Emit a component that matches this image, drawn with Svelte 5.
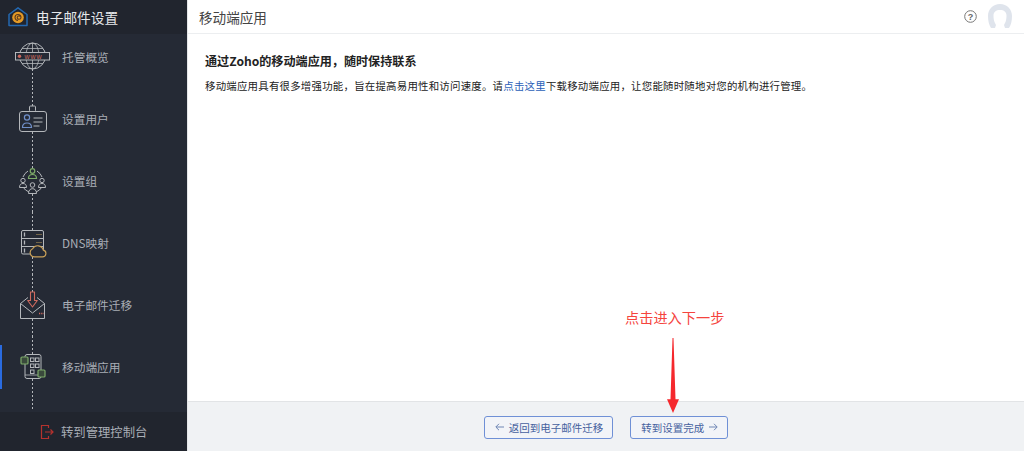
<script>
	const items = [
		{ name: '托管概览', icon: 'globe' },
		{ name: '设置用户', icon: 'user' },
		{ name: '设置组', icon: 'group' },
		{ name: 'DNS映射', icon: 'dns' },
		{ name: '电子邮件迁移', icon: 'mail' },
		{ name: '移动端应用', icon: 'mobile', active: true }
	];
</script>

<div class="page">
	<aside class="sidebar">
		<div class="brand">
			<svg class="logo" width="20" height="20" viewBox="0 0 20 20" fill="none">
				<path d="M1 7.500 10 .8l9 6.700V18.500H1z" stroke="#2468b0" stroke-width="1.500" stroke-linejoin="round" />
				<circle cx="10" cy="10.500" r="5.800" fill="#e59a25" />
				<path d="M10 13.500a3 3 0 1 1 3-3c0 1.200-1 1.800-2 1.800a1.700 1.700 0 1 1 1-3" stroke="#5b3a1c" stroke-width="1.100" />
			</svg>
			<span>电子邮件设置</span>
		</div>
		<nav class="steps">
			{#each items as item}
				<div class="step" class:active={item.active}>
					<svg class="step-icon" width="48" height="62" viewBox="0 0 48 62" fill="none" stroke="#b4b7bb" stroke-width="1">
						{#if item.icon === 'globe'}
							<circle cx="24.500" cy="30" r="13" />
							<ellipse cx="24.500" cy="30" rx="6.500" ry="13" stroke-width="0.800" />
							<path d="M24.500 17v26M14 22.500h21M14 37.500h21" stroke-width="0.800" />
							<rect x="7.500" y="26.500" width="34" height="7.500" fill="#252a35" />
							<circle cx="11.500" cy="30.200" r="1.700" fill="#d06a5f" stroke="none" />
							<text x="16.500" y="32.800" class="www">www</text>
							<path d="M24.500 43v19" stroke-dasharray="2 2" />
						{:else if item.icon === 'user'}
							<path d="M24.500 0v18" stroke-dasharray="2 2" />
							<rect x="21.500" y="18" width="6" height="5.500" rx="1" />
							<rect x="11.500" y="23.500" width="27" height="20" rx="2.500" />
							<circle cx="19" cy="29.500" r="2.600" stroke="#6f8fc9" stroke-width="1.200" />
							<path d="M14.500 39.500c0-3 2-4.500 4.500-4.500s4.500 1.500 4.500 4.500z" stroke="#6f8fc9" stroke-width="1.200" />
							<path d="M25.500 30h9M25.500 34h9M25.500 38h6" />
							<path d="M24.500 44v18" stroke-dasharray="2 2" />
						{:else if item.icon === 'group'}
							<path d="M24.500 0v18" stroke-dasharray="2 2" />
							<path d="M15 27a12 12 0 0 1 5-6M29 21a12 12 0 0 1 5 6M34 37a12 12 0 0 1-6 5M15 37a12 12 0 0 0 6 5" />
							<circle cx="24.500" cy="21" r="2.300" stroke="#7dab69" stroke-width="1.200" />
							<path d="M20.500 28.500c0-3 2-4 4-4s4 1 4 4z" stroke="#7dab69" stroke-width="1.200" />
							<circle cx="15" cy="30.500" r="2.200" />
							<path d="M11.500 37.500c0-3 1.500-4 3.500-4s3.500 1 3.500 4z" />
							<circle cx="34" cy="30.500" r="2.200" />
							<path d="M30.500 37.500c0-3 1.500-4 3.500-4s3.500 1 3.500 4z" />
							<circle cx="24.500" cy="35" r="2.300" />
							<path d="M20.500 43.500c0-3.500 2-4.800 4-4.800s4 1.300 4 4.800z" />
							<path d="M24.500 44v18" stroke-dasharray="2 2" />
						{:else if item.icon === 'dns'}
							<path d="M24.500 0v18" stroke-dasharray="2 2" />
							<rect x="13.500" y="18.500" width="22" height="23.500" rx="1.500" />
							<path d="M13.500 26.500h22M13.500 34.500h22" />
							<path d="M16.500 20.500v4M16.500 28.500v4M16.500 36.500v4" stroke-width="1.300" />
							<path d="M28.500 22.500h5M28.500 30.500h5" stroke="#c2a15f" stroke-dasharray="1 1" />
							<path d="M26.500 44.800h8a3.400 3.400 0 0 0 .8-6.700 5.800 5.800 0 0 0-10.700-1.300 4.200 4.200 0 0 0 1.900 8z" fill="#252a35" stroke="#c9a058" stroke-width="1.200" />
							<path d="M24.500 45v17" stroke-dasharray="2 2" />
						{:else if item.icon === 'mail'}
							<path d="M24.500 0v18" stroke-dasharray="2 2" />
							<path d="M12.500 29.500 20 23.500M29 23.500l7.500 6M12.500 29.500V44.500h24V29.500M12.500 29.500l12 9.500 12-9.500" stroke-linejoin="round" />
							<path d="M22.500 18h4v8.500h2.800L24.500 33l-4.800-6.500h2.800z" stroke="#cf6a5f" stroke-width="1.100" stroke-linejoin="round" />
							<path d="M31 39.500h4.500" stroke="#cf6a5f" stroke-width="1.500" stroke-dasharray="1 .8" />
							<path d="M24.500 45v17" stroke-dasharray="2 2" />
						{:else}
							<path d="M24.500 0v18" stroke-dasharray="2 2" />
							<rect x="17" y="18.500" width="16" height="24" rx="2" />
							<path d="M17 39h16" stroke-width="0.800" />
							<rect x="22.500" y="22" width="3.500" height="3.500" /><rect x="27.500" y="22" width="3.500" height="3.500" />
							<rect x="22.500" y="28" width="3.500" height="3.500" /><rect x="27.500" y="28" width="3.500" height="3.500" />
							<rect x="22.500" y="34" width="3.500" height="3.500" />
							<rect x="13" y="21" width="7" height="7" rx="1" fill="#3a4a3c" stroke="#7dab69" stroke-width="1.200" />
							<rect x="30" y="34" width="7" height="7" rx="1" fill="#3a4a3c" stroke="#7dab69" stroke-width="1.200" />
							<path d="M24.500 43v32" stroke-dasharray="2 2" />
						{/if}
					</svg>
					<span>{item.name}</span>
				</div>
			{/each}
		</nav>
		<div class="console">
			<svg width="14" height="16" viewBox="0 0 14 16" fill="none" stroke="#b5322e" stroke-width="1.200">
				<path d="M8.500 4V1.500H1.500v13h7V12" />
				<path d="M5 8h8M10.500 5.500 13 8l-2.500 2.500" />
			</svg>
			<span>转到管理控制台</span>
		</div>
	</aside>

	<main class="main">
		<header class="topbar">
			<h1>移动端应用</h1>
			<div class="top-actions">
				<svg width="13" height="13" viewBox="0 0 13 13" fill="none">
					<circle cx="6.500" cy="6.500" r="5.800" stroke="#777" />
					<text x="6.500" y="9.700" class="help">?</text>
				</svg>
				<svg class="avatar" width="24" height="24" viewBox="0 0 24 24">
					<path d="M12 0C5 0 0 5 0 12c0 5 1 9 3 12h4l1-3-1.500-3c-.7-2-1-4-1-6.500C5.500 8 8 6 12 6s6.500 2 6.500 5.500c0 2.500-.3 4.500-1 6.500L16 21l1 3h4c2-3 3-7 3-12C24 5 19 0 12 0z" fill="#dfe4ec" />
				</svg>
			</div>
		</header>
		<section class="content">
			<h2>通过Zoho的移动端应用，随时保持联系</h2>
			<p>移动端应用具有很多增强功能，旨在提高易用性和访问速度。请<a href="#top">点击这里</a>下载移动端应用，让您能随时随地对您的机构进行管理。</p>
		</section>
		<footer class="actions">
			<button type="button">
				<svg width="9" height="8" viewBox="0 0 9 8" fill="none" stroke="#6f86b5"><path d="M9 4H1M4 .8 .8 4 4 7.200" /></svg>
				返回到电子邮件迁移
			</button>
			<button type="button">
				转到设置完成
				<svg width="9" height="8" viewBox="0 0 9 8" fill="none" stroke="#6f86b5"><path d="M0 4h8M5 .8 8.200 4 5 7.200" /></svg>
			</button>
		</footer>
		<div class="note">
			<span>点击进入下一步</span>
			<svg width="14" height="75" viewBox="0 0 14 76" preserveAspectRatio="none">
				<path d="M6.500 0h1L9.500 62H13L7 76 1 62h3.500z" fill="#f5282d" />
			</svg>
		</div>
	</main>
</div>

<style>
	:global(body) {
		margin: 0;
	}

	.page {
		display: flex;
		width: 1024px;
		height: 451px;
		overflow: hidden;
		font-family: 'Noto Sans CJK SC', 'Liberation Sans', sans-serif;
	}

	.sidebar {
		display: flex;
		flex-direction: column;
		flex: 0 0 187px;
		background: #252a35;
		color: #a9aeb6;
		font-size: 11.700px;
	}

	.brand {
		display: flex;
		align-items: center;
		gap: 8px;
		height: 34px;
		padding-left: 8px;
		position: relative;
		background: #21252e;
		color: #e6e8ea;
		font-size: 13.700px;
	}

	.logo {
		flex: none;
	}

	.steps {
		flex: 1;
		margin-top: -8px;
		position: relative;
	}

	.step {
		display: flex;
		align-items: center;
		height: 62px;
		padding-left: 8px;
		gap: 6px;
		position: relative;
	}

	.step span {
		margin-bottom: 2px;
	}

	.step.active::before {
		content: '';
		position: absolute;
		left: 0;
		top: 9px;
		bottom: 9px;
		width: 2px;
		background: #2a6be0;
	}

	.step-icon {
		flex: none;
		overflow: visible;
	}

	.www {
		font-family: 'Liberation Sans', sans-serif;
		font-size: 7px;
		letter-spacing: 1px;
		fill: #d06a5f;
		stroke: none;
	}

	.console {
		display: flex;
		align-items: center;
		gap: 7px;
		height: 39px;
		padding-left: 40px;
		background: #21252e;
		font-size: 12.350px;
	}

	.main {
		flex: 1;
		display: flex;
		flex-direction: column;
		position: relative;
		min-width: 0;
		background: #fff;
		border-left: 1px solid #e4e6e8;
	}

	.topbar {
		display: flex;
		align-items: center;
		justify-content: space-between;
		height: 34px;
		box-sizing: border-box;
		padding: 0 12px 0 11px;
		border-bottom: 1px solid #eceef0;
	}

	h1 {
		margin: 0;
		font-size: 13.600px;
		font-weight: 400;
		color: #444;
	}

	.top-actions {
		display: flex;
		align-items: center;
		gap: 11px;
		padding-bottom: 1px;
	}

	.help {
		font-family: 'Liberation Sans', sans-serif;
		font-size: 9px;
		font-weight: 700;
		fill: #666;
		stroke: none;
		text-anchor: middle;
	}

	.content {
		flex: 1;
		padding: 18px 17px;
		color: #222;
	}

	h2 {
		margin: 0;
		font-size: 12.100px;
		line-height: 17px;
		font-weight: 700;
	}

	p {
		margin: 9px 0 0;
		font-size: 10.430px;
		line-height: 16px;
		letter-spacing: 0.230px;
	}

	a {
		color: #2b5fb8;
		text-decoration: none;
	}

	.actions {
		display: flex;
		justify-content: center;
		align-items: center;
		gap: 17px;
		height: 50px;
		box-sizing: border-box;
		padding-top: 1px;
		background: #f0f2f4;
		border-top: 1px solid #e2e4e6;
	}

	button {
		display: flex;
		align-items: center;
		gap: 5px;
		height: 23px;
		padding: 0 9px 0 10px;
		background: #f2f4f8;
		border: 1px solid #6f90d6;
		border-radius: 3px;
		color: #46619e;
		font-family: inherit;
		font-size: 10.500px;
	}

	.note {
		position: absolute;
		left: 437px;
		top: 308px;
		display: flex;
		flex-direction: column;
		gap: 11px;
		color: #f5443e;
		font-size: 14.200px;
		line-height: 19px;
	}

	.note svg {
		margin-left: 41px;
	}
</style>
